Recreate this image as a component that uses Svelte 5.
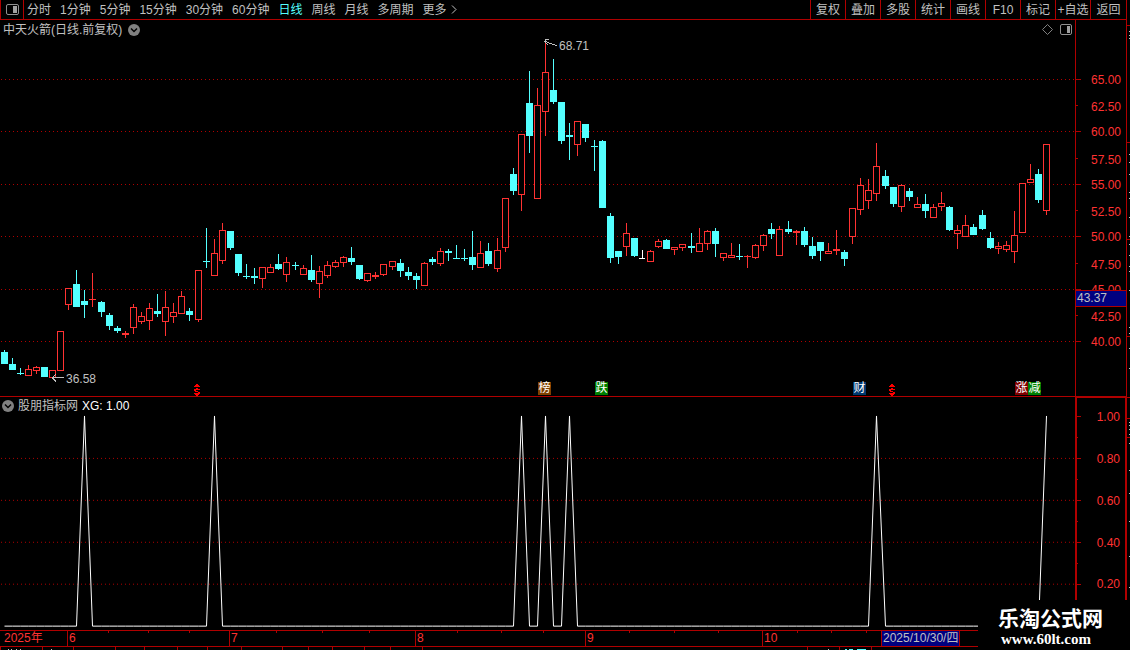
<script lang="ts">
  const periods = ["分时", "1分钟", "5分钟", "15分钟", "30分钟", "60分钟", "日线", "周线", "月线", "多周期", "更多"];
  const tools = ["复权", "叠加", "多股", "统计", "画线", "F10", "标记", "+自选", "返回"];

  let period = $state("日线");

  const CHART_W = 1075;
  const PRICE_TOP = 20;
  const PRICE_H = 376;
  const XG_TOP = 397;
  const XG_H = 233;

  // high, body top, body bottom, low, kind
  // u = rising (hollow), d = falling (filled), r = filled red, w = unchanged
  type Candle = [number, number, number, number, string];
  const candles: Candle[] = [
    [350, 352, 364, 364, "d"], [358, 364, 370, 370, "d"], [368, 373, 374, 375, "d"], [365, 369, 376, 376, "u"],
    [366, 367, 371, 374, "u"], [367, 367, 377, 377, "d"], [370, 370, 378, 378, "u"], [331, 331, 371, 371, "u"],
    [288, 288, 305, 310, "u"], [270, 284, 307, 307, "d"], [290, 301, 305, 318, "d"], [273, 299, 300, 307, "r"],
    [301, 302, 312, 317, "d"], [313, 315, 326, 330, "d"], [326, 328, 331, 333, "d"], [331, 333, 335, 338, "r"],
    [304, 307, 328, 334, "u"], [312, 316, 322, 324, "u"], [303, 308, 321, 330, "u"], [294, 311, 314, 317, "d"],
    [291, 307, 322, 336, "u"], [303, 312, 317, 323, "u"], [291, 296, 314, 314, "u"], [308, 311, 315, 321, "d"],
    [270, 270, 320, 322, "u"], [228, 261, 262, 268, "d"], [239, 253, 276, 276, "u"], [223, 230, 261, 264, "u"],
    [231, 231, 248, 250, "d"], [254, 254, 273, 276, "d"], [264, 276, 277, 279, "d"], [268, 276, 278, 284, "d"],
    [267, 267, 279, 288, "u"], [264, 267, 273, 273, "u"], [254, 264, 269, 270, "d"], [257, 262, 275, 282, "u"],
    [262, 265, 266, 270, "d"], [265, 268, 275, 275, "u"], [255, 270, 280, 282, "d"], [266, 271, 284, 298, "u"],
    [261, 265, 276, 278, "u"], [260, 262, 267, 268, "u"], [256, 257, 263, 267, "u"], [247, 258, 262, 265, "d"],
    [265, 265, 279, 280, "d"], [273, 273, 281, 282, "u"], [272, 275, 277, 279, "r"], [264, 264, 275, 276, "u"],
    [261, 261, 267, 270, "u"], [259, 263, 271, 277, "d"], [267, 272, 276, 280, "d"], [273, 276, 280, 289, "d"],
    [262, 263, 286, 286, "u"], [257, 259, 262, 265, "d"], [248, 251, 264, 266, "u"], [249, 251, 253, 261, "d"],
    [245, 258, 259, 259, "d"], [249, 258, 259, 261, "d"], [231, 257, 265, 270, "d"], [241, 253, 268, 268, "u"],
    [243, 251, 264, 266, "d"], [238, 250, 269, 272, "u"], [198, 198, 248, 252, "u"], [168, 174, 191, 195, "d"],
    [134, 134, 195, 211, "u"], [71, 103, 136, 153, "d"], [88, 105, 199, 199, "u"], [43, 72, 112, 136, "u"],
    [59, 90, 102, 104, "d"], [102, 102, 141, 144, "d"], [123, 135, 137, 160, "d"], [121, 121, 145, 156, "u"],
    [124, 124, 138, 142, "d"], [140, 146, 147, 171, "d"], [140, 141, 208, 208, "d"], [213, 216, 258, 263, "d"],
    [251, 251, 257, 264, "d"], [223, 233, 247, 256, "u"], [238, 238, 256, 257, "d"], [250, 258, 259, 259, "w"],
    [250, 251, 262, 262, "u"], [239, 241, 247, 248, "u"], [239, 240, 249, 249, "d"], [247, 247, 250, 255, "u"],
    [244, 244, 248, 251, "u"], [233, 246, 248, 253, "d"], [228, 243, 252, 252, "u"], [230, 231, 244, 250, "u"],
    [228, 231, 244, 257, "d"], [253, 253, 258, 261, "u"], [243, 255, 258, 258, "u"], [244, 256, 257, 260, "d"],
    [255, 256, 257, 268, "r"], [244, 245, 258, 259, "u"], [234, 235, 246, 251, "u"], [223, 229, 234, 239, "d"],
    [226, 229, 256, 256, "u"], [221, 229, 232, 234, "d"], [230, 231, 233, 245, "r"], [227, 231, 245, 247, "d"],
    [237, 246, 256, 259, "d"], [242, 242, 251, 261, "d"], [243, 251, 254, 254, "u"], [230, 249, 251, 255, "r"],
    [250, 252, 259, 266, "d"], [208, 208, 237, 244, "u"], [178, 185, 210, 215, "u"], [179, 190, 201, 209, "u"],
    [143, 166, 194, 201, "u"], [170, 176, 186, 189, "d"], [187, 187, 204, 207, "d"], [184, 185, 207, 212, "u"],
    [188, 191, 197, 201, "d"], [197, 204, 208, 208, "u"], [194, 204, 211, 218, "d"], [204, 207, 218, 218, "u"],
    [192, 203, 207, 211, "u"], [206, 207, 230, 231, "d"], [225, 230, 234, 249, "u"], [215, 225, 237, 237, "u"],
    [224, 227, 235, 235, "d"], [210, 215, 229, 230, "d"], [232, 238, 248, 249, "d"], [242, 246, 249, 254, "u"],
    [241, 245, 250, 252, "u"], [211, 235, 252, 263, "u"], [183, 183, 233, 233, "u"], [164, 179, 183, 183, "u"],
    [169, 174, 200, 203, "d"], [144, 144, 211, 215, "u"],
  ];

  const colors: Record<string, string> = { u: "#ff3232", r: "#ff3232", d: "#54ffff", w: "#ffffff" };

  const candleX = (i: number) => Math.floor(4.03 + 8.0828 * i);

  const priceTicks = [
    [79, "65.00"], [106, "62.50"], [131, "60.00"], [159, "57.50"], [184, "55.00"], [211, "52.50"],
    [236, "50.00"], [264, "47.50"], [289, "45.00"], [316, "42.50"], [341, "40.00"],
  ] as [number, string][];
  const xgTicks = [
    [416, "1.00"], [458, "0.80"], [500, "0.60"], [542, "0.40"], [584, "0.20"],
  ] as [number, string][];

  // bars where the XG signal fires
  const signals = [10, 26, 64, 67, 70, 108, 129];
  const xgLine = candles
    .map((_, i) => `${candleX(i) + 0.5},${signals.includes(i) ? 416 : 626.5}`)
    .join(" ");

  const badges = [
    { x: 538, text: "榜", bg: "#804000" },
    { x: 595, text: "跌", bg: "#008000" },
    { x: 853, text: "财", bg: "#003870" },
    { x: 1015, text: "涨", bg: "#800000" },
    { x: 1028, text: "减", bg: "#008000" },
  ];
  const dollars = [193, 888];

  const months = [
    { x: 67, text: "6" },
    { x: 229, text: "7" },
    { x: 415, text: "8" },
    { x: 585, text: "9" },
    { x: 762, text: "10" },
  ];
  const weekTicks = [108, 148, 189, 276, 322, 369, 457, 501, 543, 629, 674, 718, 797, 831, 866];
  const lowerTicks = [0, 42, 73, 115, 144, 177, 207, 241, 282, 308, 332, 364, 390, 422, 807, 839, 871];
  const stripTicks = [25, 142, 239, 336, 397, 418, 437];
  const stripMarks = [31, 35, 38, 154, 162, 174, 192, 198, 217, 236, 244, 255, 266, 271, 290, 327, 333, 348, 368, 422, 425, 429, 434, 443, 470, 493, 521, 556, 587];

  const pct = (v: number, total: number) => (v / total) * 100;
</script>

<div class="app">
  <div class="main">
    <nav class="toolbar">
      <button class="layout" aria-label="布局">
        <svg width="13" height="11" viewBox="0 0 13 11">
          <rect x="0.5" y="0.5" width="12" height="10" rx="1.5" fill="none" stroke="#909090" />
          <rect x="7" y="2" width="4" height="7" fill="#a0a0a0" />
        </svg>
      </button>
      <div class="periods">
        {#each periods as p (p)}
          <button class:active={p === period} onclick={() => (period = p)}>{p}</button>
        {/each}
        <svg class="more" width="6" height="9" viewBox="0 0 6 9">
          <path d="M1 0.5 L5 4.5 L1 8.5" fill="none" stroke="#c0c0c0" />
        </svg>
      </div>
      <div class="tools">
        {#each tools as t (t)}
          <button>{t}</button>
        {/each}
      </div>
    </nav>

    <section class="pane price">
      <div class="plot">
        <svg class="chart" viewBox="0 {PRICE_TOP} {CHART_W} {PRICE_H}" preserveAspectRatio="none" shape-rendering="crispEdges">
          {#each priceTicks as [y], i (y)}
            {#if i % 2 === 0}
              <line x1="1" x2={CHART_W} y1={y + 0.5} y2={y + 0.5} class="grid" />
            {/if}
          {/each}
          {#each candles as [high, top, bottom, low, kind], i (i)}
            {@const x = candleX(i)}
            <rect {x} y={high} width="1" height={low - high} fill={colors[kind]} />
            {#if kind === "u"}
              <rect x={x - 2.5} y={top + 0.5} width="6" height={bottom - top - 1} fill="#000" stroke={colors[kind]} />
            {:else}
              <rect x={x - 3} y={top} width={kind === "w" ? 6 : 7} height={bottom - top} fill={colors[kind]} />
            {/if}
          {/each}
          <path d="M557 45.5 L553 44.5 L545.5 41.5 M549 39.5 H546 L545 41.5 L548 45" class="pointer" />
          <path d="M64 377.5 H52 M56 374 L52 377.5 L56 381" class="pointer" />
        </svg>

        <div class="title">
          <span>中天火箭(日线.前复权)</span>
          <button class="toggle" aria-label="展开">
            <svg width="12" height="12" viewBox="0 0 12 12">
              <circle cx="6" cy="6" r="6" fill="#808080" />
              <path d="M3 4.5 L6 7.5 L9 4.5" fill="none" stroke="#000" stroke-width="1.5" />
            </svg>
          </button>
        </div>
        <div class="corner">
          <svg width="11" height="11" viewBox="0 0 11 11">
            <path d="M5.5 0.5 L10.5 5.5 L5.5 10.5 L0.5 5.5 Z" fill="none" stroke="#808080" />
          </svg>
          <svg width="12" height="11" viewBox="0 0 12 11">
            <rect x="0.5" y="0.5" width="11" height="10" rx="1.5" fill="none" stroke="#909090" />
            <rect x="7" y="2" width="3" height="7" fill="#a0a0a0" />
          </svg>
        </div>

        <span class="note" style="left:{pct(559, CHART_W)}%;top:{pct(46 - PRICE_TOP, PRICE_H)}%">68.71</span>
        <span class="note" style="left:{pct(66, CHART_W)}%;top:{pct(379 - PRICE_TOP, PRICE_H)}%">36.58</span>

        {#each badges as b (b.text)}
          <span class="badge" style="left:{pct(b.x, CHART_W)}%;background:{b.bg}">{b.text}</span>
        {/each}
        {#each dollars as x (x)}
          <svg class="dollar" style="left:{pct(x, CHART_W)}%" width="8" height="12" viewBox="0 0 8 12" shape-rendering="crispEdges">
            <path d="M3 0 H5 V1 H6 V2 H7 V3 H1 V2 H2 V1 H3 Z" fill="#ff0000" />
            <path d="M3 4 H5 V5 H7 V6 H3 V7 H5 V8 H7 V10 H6 V11 H2 V10 H1 V9 H5 V8 H2 V7 H1 V5 H3 Z M3 11 H5 V12 H3 Z" fill="#ff0000" />
          </svg>
        {/each}
      </div>
      <div class="axis">
        <svg class="chart" viewBox="0 {PRICE_TOP} 50 {PRICE_H}" preserveAspectRatio="none" shape-rendering="crispEdges">
          {#each priceTicks as [y], i (y)}
            <rect x="0" y={i % 2 ? y - 1 : y} width={i % 2 ? 2 : 5} height="1" fill="#b00000" />
          {/each}
        </svg>
        {#each priceTicks as [y, label] (label)}
          <span class="tick" style="top:{pct(y + 1 - PRICE_TOP, PRICE_H)}%">{label}</span>
        {/each}
        <span class="cursor" style="top:{pct(290 - PRICE_TOP, PRICE_H)}%">43.37</span>
      </div>
    </section>

    <section class="pane indicator">
      <div class="plot">
        <svg class="chart" viewBox="0 {XG_TOP} {CHART_W} {XG_H}" preserveAspectRatio="none" shape-rendering="crispEdges">
          {#each xgTicks.slice(1) as [y] (y)}
            <line x1="1" x2={CHART_W} y1={y + 0.5} y2={y + 0.5} class="grid" />
          {/each}
          <polyline points={xgLine} fill="none" stroke="#fff" />
        </svg>
        <div class="title xg">
          <button class="toggle" aria-label="展开">
            <svg width="12" height="12" viewBox="0 0 12 12">
              <circle cx="6" cy="6" r="6" fill="#808080" />
              <path d="M3 4.5 L6 7.5 L9 4.5" fill="none" stroke="#000" stroke-width="1.5" />
            </svg>
          </button>
          <span>股朋指标网</span>
          <span class="value">XG: 1.00</span>
        </div>
      </div>
      <div class="axis">
        <svg class="chart" viewBox="0 {XG_TOP + 1} 48 {XG_H - 1}" preserveAspectRatio="none" shape-rendering="crispEdges">
          {#each xgTicks as [y] (y)}
            <rect x="0" {y} width="4" height="1" fill="#b00000" />
            <rect x="0" y={y + 21} width="1" height="1" fill="#b00000" />
          {/each}
        </svg>
        {#each xgTicks as [y, label] (label)}
          <span class="tick" style="top:{pct(y - XG_TOP, XG_H)}%">{label}</span>
        {/each}
      </div>
    </section>

    <div class="timeline">
      <div class="dates">
        <span class="year">2025年</span>
        {#each months as m (m.x)}
          <span class="month" style="left:{pct(m.x, CHART_W)}%">{m.text}</span>
        {/each}
        {#each weekTicks as x (x)}
          <i class="week" style="left:{pct(x, CHART_W)}%"></i>
        {/each}
        <span class="today" style="left:{pct(881, CHART_W)}%">2025/10/30/四</span>
      </div>
    </div>

    <svg class="peek" viewBox="0 0 1126 3" preserveAspectRatio="none" shape-rendering="crispEdges">
      {#each lowerTicks as x (x)}
        <rect {x} y="0" width="1" height="3" fill="#b00000" />
      {/each}
      {#each [8, 11, 16, 20, 51, 828] as x (x)}
        <rect {x} y="2" width="1" height="1" fill="#c0c0c0" />
      {/each}
      <path d="M845 2.5 H847 M849 2.5 H853 M857 2.5 H866" stroke="#54ffff" />
    </svg>
  </div>

  <svg class="strip" viewBox="0 0 4 650" preserveAspectRatio="none" shape-rendering="crispEdges">
    <rect x="0" y="0" width="1" height="650" fill="#b00000" />
    {#each stripTicks as y (y)}
      <rect x="1" {y} width="3" height="1" fill="#b00000" />
    {/each}
    {#each stripMarks as y (y)}
      <rect x="3" {y} width="1" height="1" fill="#c0c0c0" />
    {/each}
  </svg>

  <div class="watermark">
    <strong>乐淘公式网</strong>
    <a href="http://www.60lt.com">www.60lt.com</a>
  </div>
</div>

<style>
  :global(body) {
    margin: 0;
    background: #000;
  }

  .app {
    position: relative;
    display: flex;
    height: 100vh;
    min-height: 400px;
    overflow: hidden;
    background: #000;
    color: #c0c0c0;
    font-family: "Liberation Sans", "Noto Sans CJK SC", sans-serif;
    font-size: 12px;
    line-height: 16px;
    white-space: nowrap;
  }

  .main {
    flex: 1;
    min-width: 0;
    display: flex;
    flex-direction: column;
  }

  button {
    padding: 0;
    border: 0;
    background: none;
    color: inherit;
    font: inherit;
    cursor: pointer;
  }

  svg {
    display: block;
  }

  .toolbar {
    display: flex;
    height: 19px;
    border-bottom: 1px solid #b00000;
  }

  .layout {
    display: flex;
    align-items: center;
    justify-content: center;
    width: 24px;
    border-left: 1px solid #b00000;
    border-right: 1px solid #b00000;
  }

  .periods {
    flex: 1;
    display: flex;
    align-items: center;
    gap: 9px;
    padding-left: 3px;
  }

  .periods .active {
    color: #54ffff;
  }

  .more {
    margin-left: -5px;
  }

  .tools {
    display: flex;
  }

  .tools button {
    width: 35px;
    border-left: 1px solid #b00000;
  }

  .tools button:last-child {
    width: 36px;
  }

  .pane {
    display: flex;
    min-height: 0;
  }

  .price {
    flex: 377 1 0;
    box-sizing: border-box;
    border-bottom: 1px solid #b00000;
  }

  .indicator {
    flex: 233 1 0;
  }

  .plot {
    position: relative;
    flex: 1;
    min-width: 0;
  }

  .axis {
    position: relative;
    box-sizing: border-box;
    width: 51px;
    border-left: 1px solid #b00000;
    color: #ff3232;
  }

  .indicator .axis {
    border-width: 1px 1px 0 2px;
    border-style: solid;
    border-color: #b00000;
  }

  .chart {
    position: absolute;
    inset: 0;
    width: 100%;
    height: 100%;
  }

  .grid {
    stroke: #b00000;
    stroke-dasharray: 1 3;
  }

  .pointer {
    fill: none;
    stroke: #c0c0c0;
  }

  .title {
    position: absolute;
    top: 2px;
    left: 3px;
    display: flex;
    align-items: center;
    gap: 6px;
  }

  .title svg {
    margin-bottom: 1px;
  }

  .xg {
    top: 1px;
    left: 2px;
    gap: 4px;
  }

  .value {
    color: #fff;
  }

  .corner {
    position: absolute;
    top: 4px;
    right: 3px;
    display: flex;
    gap: 7px;
  }

  .note {
    position: absolute;
    transform: translateY(-50%);
  }

  .badge {
    position: absolute;
    bottom: 1px;
    width: 13px;
    height: 13px;
    color: #fff;
    line-height: 13px;
    text-align: center;
  }

  .dollar {
    position: absolute;
    bottom: 0;
  }

  .tick {
    position: absolute;
    right: 5px;
    transform: translateY(-50%);
  }

  .cursor {
    position: absolute;
    left: 0;
    right: 0;
    padding-left: 1px;
    border-top: 1px solid #b00000;
    border-bottom: 1px solid #b00000;
    background: #000080;
    color: #c0c0c0;
    line-height: 15px;
  }

  .timeline {
    display: flex;
    padding-right: 51px;
    border-top: 1px solid #b00000;
    border-bottom: 1px solid #b00000;
    line-height: 15px;
    color: #ff3232;
  }

  .dates {
    position: relative;
    flex: 1;
  }

  .year {
    padding-left: 4px;
  }

  .month {
    position: absolute;
    top: 0;
    padding-left: 1px;
    border-left: 1px solid #b00000;
  }

  .week {
    position: absolute;
    top: 0;
    width: 1px;
    height: 2px;
    background: #b00000;
  }

  .today {
    position: absolute;
    top: 0;
    padding: 0 1px;
    border-left: 1px solid #b00000;
    border-right: 1px solid #b00000;
    background: #000080;
    color: #c0c0c0;
  }

  .peek {
    width: 100%;
    height: 3px;
  }

  .strip {
    width: 4px;
    height: 100%;
  }

  .watermark {
    position: absolute;
    right: 0;
    bottom: 0;
    box-sizing: border-box;
    width: 152px;
    height: 50px;
    padding: 8px 0 0 20px;
    background: #000;
    color: #fff;
    display: flex;
    flex-direction: column;
  }

  .watermark strong {
    font-size: 21px;
    line-height: 22px;
  }

  .watermark a {
    padding-left: 3px;
    color: inherit;
    font: bold 15px/18px "Liberation Serif", serif;
    text-decoration: none;
  }
</style>
